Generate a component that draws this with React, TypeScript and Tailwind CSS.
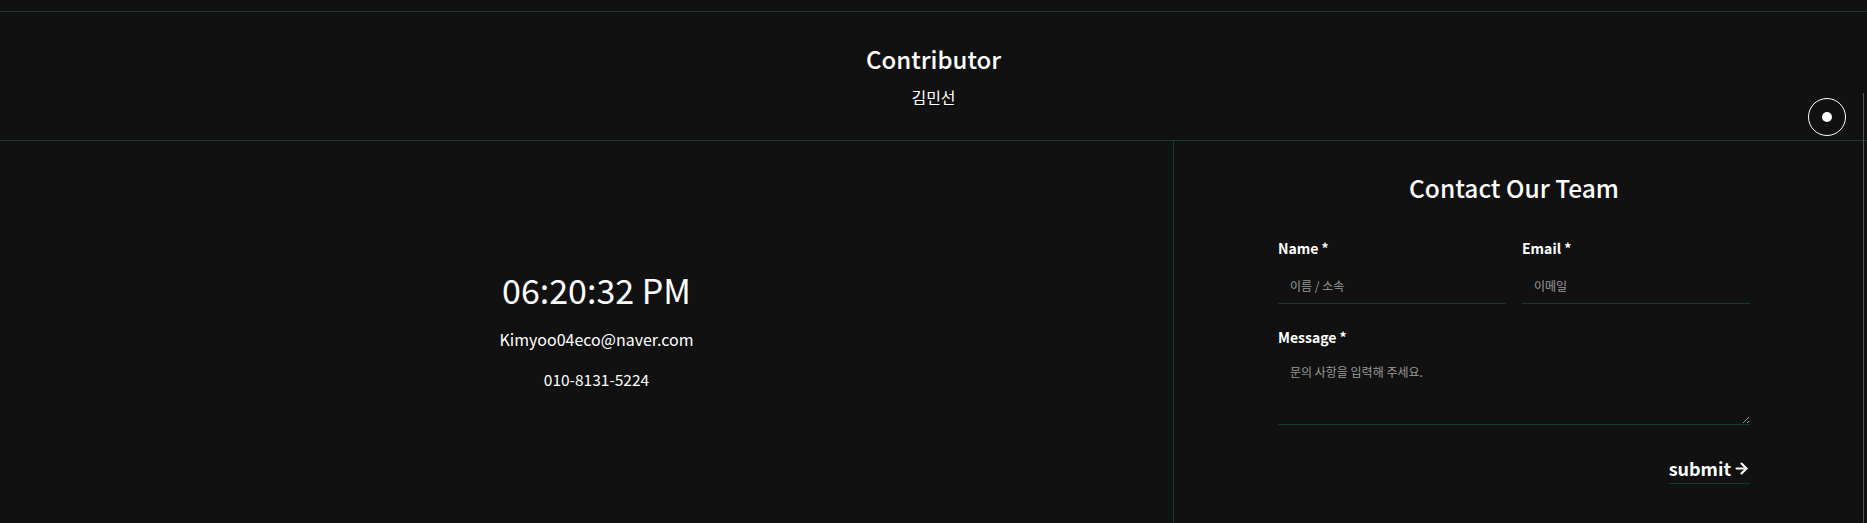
import { ArrowRight } from "lucide-react"

const FONT = "font-['Noto_Sans_CJK_KR','Noto_Sans',sans-serif]"

function Field({ label, placeholder }: { label: string; placeholder: string }) {
  return (
    <label className="flex flex-col">
      <span className="text-[14px] leading-[20px] font-bold text-white">{label} *</span>
      <input
        placeholder={placeholder}
        className="mt-[10px] h-[36px] bg-transparent border-b border-[#0f3d35] px-3 text-[12px] text-white outline-none placeholder:text-[#9a9a9a]"
      />
    </label>
  )
}

export default function App() {
  return (
    <div className={`relative min-h-screen overflow-hidden bg-[#111111] text-white ${FONT}`}>
      <div className="h-[11px]" />

      {/* Contributor */}
      <section className="flex h-[130px] flex-col items-center border-y border-[#0f3d35] pt-[31px]">
        <h2 className="text-[24px] leading-[32px] font-medium">Contributor</h2>
        <p className="mt-[12px] text-[16px] leading-[20px]">김민선</p>
      </section>

      <section className="flex h-[384px]">
        {/* Clock + contact info */}
        <div className="flex w-[1173px] flex-col items-center justify-center pb-[7px] pl-[20px]">
          <p className="text-[34px] leading-[40px]">06:20:32 PM</p>
          <p className="mt-[18px] text-[16px] leading-[22px]">Kimyoo04eco@naver.com</p>
          <p className="mt-[18px] text-[15.5px] leading-[22px]">010-8131-5224</p>
        </div>

        {/* Contact form */}
        <div className="flex-1 border-l border-[#0f3d35] pl-[104px] pt-[30px]">
          <form className="flex w-[472px] flex-col" onSubmit={(e) => e.preventDefault()}>
            <h2 className="text-center text-[24.5px] leading-[34px] font-medium">Contact Our Team</h2>
            <div className="mt-[33px] grid grid-cols-2 gap-4">
              <Field label="Name" placeholder="이름 / 소속" />
              <Field label="Email" placeholder="이메일" />
            </div>
            <label className="mt-[23px] flex flex-col">
              <span className="text-[14px] leading-[20px] font-bold">Message *</span>
              <textarea
                placeholder="문의 사항을 입력해 주세요."
                className="mt-[6px] h-[72px] bg-transparent border-b border-[#0f3d35] px-3 py-[10px] text-[12px] text-white outline-none [color-scheme:dark] placeholder:text-[#9a9a9a]"
              />
            </label>
            <div className="mt-[32px] flex justify-end">
              <button
                type="submit"
                className="flex items-center gap-[2px] border-b border-[#0f3d35] pb-[4px] text-[18px] leading-[22px] font-bold"
              >
                submit
                <ArrowRight size={17} strokeWidth={3} />
              </button>
            </div>
          </form>
        </div>
      </section>

      {/* Floating toggle */}
      <button className="absolute left-[1808px] top-[98px] flex h-[38px] w-[38px] items-center justify-center rounded-full border-[1.5px] border-white">
        <span className="h-[10px] w-[10px] rounded-full bg-white" />
      </button>
      <div className="absolute right-[3px] top-[93px] bottom-0 w-px bg-[#555555]" />
    </div>
  )
}
